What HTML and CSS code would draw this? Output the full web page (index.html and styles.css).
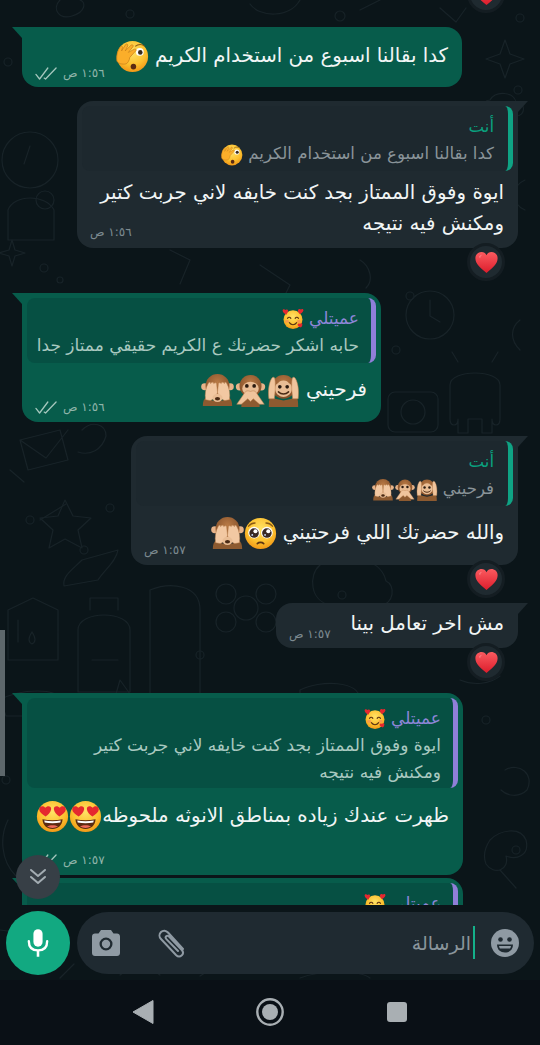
FILE: index.html
```html
<!DOCTYPE html>
<html lang="ar" dir="rtl">
  <head>
    <meta charset="UTF-8" />
    <meta name="viewport" content="width=device-width, initial-scale=1.0" />
    <title>محادثة</title>
    <link rel="stylesheet" href="styles.css">
  </head>
  <body>
    <!-- emoji and icon symbols -->
    <svg class="defs" aria-hidden="true">
      <defs>
        <radialGradient id="skin" cx="50%" cy="35%" r="70%">
          <stop offset="0" stop-color="#ffe266" />
          <stop offset="0.6" stop-color="#fcc02e" />
          <stop offset="1" stop-color="#ef8f12" />
        </radialGradient>
        <radialGradient id="fur" cx="50%" cy="35%" r="70%">
          <stop offset="0" stop-color="#b97a45" />
          <stop offset="1" stop-color="#7d4a26" />
        </radialGradient>
        <linearGradient id="red" x1="0" y1="0" x2="0" y2="1">
          <stop offset="0" stop-color="#fb5a5f" />
          <stop offset="1" stop-color="#dc1d2c" />
        </linearGradient>
        <symbol id="e-heart" viewBox="0 0 36 36">
          <path fill="url(#red)" d="M18 33C9 26 2 20 2 12 2 6 6.500 3 11 3c3 0 5.500 1.500 7 4.500C19.500 4.500 22 3 25 3c4.500 0 9 3 9 9 0 8-7 14-16 21z" />
          <path fill="#ff9a9c" opacity=".6" d="M7 10c1-2 3-3 5-3-2 1-3 3-3 5z" />
        </symbol>
        <symbol id="e-peek" viewBox="0 0 36 36">
          <circle cx="18" cy="18" r="17" fill="url(#skin)" />
          <circle cx="26" cy="13" r="4.200" fill="#fff" />
          <circle cx="26.500" cy="13.500" r="2.500" fill="#3a2a1c" />
          <path d="M21 7c3-2.500 7-2.500 10-.5" stroke="#8a5a14" stroke-width="1.200" fill="none" />
          <ellipse cx="19" cy="29" rx="3" ry="3.200" fill="#5b2a12" />
          <path fill="#fbae2a" stroke="#c9801a" stroke-width=".8" d="M1 23C0 17 2 11 5 7c1-1 2.500 0 2 1.500L6 12l4.500-7c1-1.500 3 0 2.300 1.500L10 12l6.500-6.500c1.200-1 3 .4 2 1.800l-5 6.200 6.500-3.500c1.500-.8 2.600 1 1.400 2L15 19c-.5 3.500-2 6-4 7-4 1-9-.5-10-3z" />
        </symbol>
        <symbol id="e-love" viewBox="0 0 36 36">
          <circle cx="18" cy="19" r="15.500" fill="url(#skin)" />
          <ellipse cx="8.500" cy="22" rx="3.200" ry="2.200" fill="#f58a5a" opacity=".7" />
          <ellipse cx="27.500" cy="22" rx="3.200" ry="2.200" fill="#f58a5a" opacity=".7" />
          <path d="M9 17c1.500-2.500 4-2.500 5.500 0M21.500 17c1.500-2.500 4-2.500 5.500 0M12 24c3 4.500 9 4.500 12 0" stroke="#5b3313" stroke-width="1.800" fill="none" stroke-linecap="round" />
          <path fill="#e5282f" d="M7 11C3.500 8.500 1 6.500 1 4c0-2 2.800-3.200 4.500-.8C7 1.500 10.500 2.300 10 5c-.3 2-1.500 4-3 6zM29 10c-1.500-2-3-4-3-6 0-2.500 3.500-3.500 5-1.500C32.500.5 35.500 1.500 35 4c-.4 2.500-3 4.500-6 6zM31 32c-2.500-.5-5-2-5.500-4-.5-2.300 2.500-3.500 3.800-2 .8-2 4-1.500 4 1 0 2-1 3.500-2.300 5z" />
        </symbol>
        <symbol id="e-hearteyes" viewBox="0 0 36 36">
          <circle cx="18" cy="18" r="17" fill="url(#skin)" />
          <path fill="#e5282f" d="M10.500 18C6.500 15.500 3.500 13 3.500 10c0-3 4-4.500 6.500-1.500C12.500 5.500 17 6.500 16.500 10c-.3 3-3 6-6 8zM25.500 18c-3-2-5.700-5-6-8-.5-3.500 4-4.500 6.500-1.500C28.500 5.500 32.500 7 32.500 10c0 3-3 5.500-7 8z" />
          <path fill="#5b2a12" d="M7 21c7 1.600 15 1.600 22 0-.5 7-5 10.500-11 10.500S7.500 28 7 21z" />
          <path fill="#fff" d="M9 22.400c6 1 12 1 18 0l-.5 2.200c-5.500.9-11.500.9-17 0z" />
          <path fill="#ef6a5a" d="M12 29c3-2 9-2 12 0-3.500 2-8.500 2-12 0z" />
        </symbol>
        <symbol id="e-plead" viewBox="0 0 36 36">
          <circle cx="18" cy="18" r="17" fill="url(#skin)" />
          <path d="M5 10c2-2.500 4.500-3.500 7-3.500M31 10c-2-2.500-4.500-3.500-7-3.500" stroke="#8a5a14" stroke-width="1.500" fill="none" stroke-linecap="round" />
          <circle cx="11" cy="17" r="6.400" fill="#fff" />
          <circle cx="25" cy="17" r="6.400" fill="#fff" />
          <circle cx="11" cy="17.500" r="5.200" fill="#3a2a24" />
          <circle cx="25" cy="17.500" r="5.200" fill="#3a2a24" />
          <circle cx="12.500" cy="15.500" r="2.200" fill="#fff" />
          <circle cx="26.500" cy="15.500" r="2.200" fill="#fff" />
          <circle cx="9" cy="19.500" r="1" fill="#cfe3ff" />
          <circle cx="23" cy="19.500" r="1" fill="#cfe3ff" />
          <path d="M14.500 29c1.800-1.800 5.200-1.800 7 0" stroke="#5b3313" stroke-width="1.800" fill="none" stroke-linecap="round" />
        </symbol>
        <symbol id="e-m-see" viewBox="0 0 36 36">
          <path fill="#8d5a30" d="M2 35c0-5 1-8 4-10l6 4h12l6-4c3 2 4 5 4 10z" />
          <circle cx="4" cy="14" r="3.800" fill="#e8b48a" />
          <circle cx="32" cy="14" r="3.800" fill="#e8b48a" />
          <circle cx="18" cy="13" r="13" fill="url(#fur)" />
          <path fill="#f2c8a2" stroke="#b9804e" stroke-width=".5" d="M5 28C4 22 5 15 8 10c1-1.500 2.500-1 2.500.5 1-2 3-2 3.500 0 1-1.500 3-1 3 .5L18 20c-1 4-4 8-8 9zM31 28c1-6 0-13-3-18-1-1.500-2.500-1-2.500.5-1-2-3-2-3.500 0-1-1.500-3-1-3 .5L18 20c1 4 4 8 8 9z" />
          <ellipse cx="18" cy="26" rx="5.500" ry="4.500" fill="#e9bd95" />
          <ellipse cx="18" cy="27" rx="2.800" ry="2" fill="#4a2a15" />
        </symbol>
        <symbol id="e-m-speak" viewBox="0 0 36 36">
          <path fill="#8d5a30" d="M8 36c0-8 4-12 10-12s10 4 10 12z" />
          <circle cx="6" cy="14" r="4" fill="#e8b48a" />
          <circle cx="30" cy="14" r="4" fill="#e8b48a" />
          <circle cx="18" cy="13" r="12" fill="url(#fur)" />
          <ellipse cx="18" cy="16" rx="9" ry="7.500" fill="#e9bd95" />
          <circle cx="14" cy="13" r="2" fill="#2a1a10" />
          <circle cx="22" cy="13" r="2" fill="#2a1a10" />
          <path fill="#f0c49c" stroke="#b9804e" stroke-width=".6" d="M3 33l9-13c1-2 3-2 6-1 3-1 5-1 6 1l9 13h-5l-7-6-3 3-3-3-7 6z" />
        </symbol>
        <symbol id="e-m-hear" viewBox="0 0 36 36">
          <path fill="#8d5a30" d="M2 36c0-5 0-9 2-11l5 2 9 2 9-2 5-2c2 2 2 6 2 11z" />
          <circle cx="18" cy="14" r="13" fill="url(#fur)" />
          <path fill="#e9bd95" d="M18 7c3 0 5 1.500 6 3 3 1 4 5 3 8-1 4-5 7-9 7s-8-3-9-7c-1-3 0-7 3-8 1-1.500 3-3 6-3z" />
          <circle cx="14" cy="14" r="2" fill="#2a1a10" />
          <circle cx="22" cy="14" r="2" fill="#2a1a10" />
          <path d="M12.500 19.500c3 3 8 3 11 0" stroke="#4a2a15" stroke-width="1.600" fill="none" stroke-linecap="round" />
          <path fill="#f0c49c" stroke="#b9804e" stroke-width=".6" d="M2 27C1 18 2 10 5 5c1-2 3-2 3.500 0 .8 4 .5 8 .5 12l-1 10zM34 27c1-9 0-17-3-22-1-2-3-2-3.500 0-.8 4-.5 8-.5 12l1 10z" />
        </symbol>
        <symbol id="i-ticks" viewBox="0 0 24 14">
          <path d="M1 8l4 5L14 1M10 12l1.500 1L23 1" fill="none" stroke="currentColor" stroke-width="1.400" stroke-linecap="round" stroke-linejoin="round" />
        </symbol>
      </defs>
    </svg>

    <div class="screen">
      <!-- wallpaper, drawn once behind chat and composer -->
      <svg class="wallpaper" viewBox="0 0 540 980" aria-hidden="true">
        <g fill="none" stroke="#182328" stroke-width="1.200" stroke-linecap="round" stroke-linejoin="round">
          <circle cx="30" cy="160" r="28" />
          <path d="M8 210c6-16 38-16 46 0v30H8zM30 146l-6 18" />
          <circle cx="45" cy="200" r="9" />
          <path d="M60 0c-8 8-2 20 12 16s14-14 8-16M250 4c10 14 40 14 50-4M360 10l20-10M440 8l16 14 10-14" />
          <path d="M505 40l5 14 14 5-14 5-5 14-5-14-14-5 14-5zM12 240l3 10 10 3-10 3-3 10-3-10-10-3 10-3z" />
          <path d="M490 100c6-10 24-8 26 2 10 0 10 14 0 14h-26c-10 0-10-16 0-16zM525 180c-14 6-14 24 0 30" />
          <path d="M170 250l20 10-10 24M260 265l30 20-10 20M360 260c10 6 14 20 6 28" />
          <path d="M20 440l40-10 8 30-40 10zM20 440l26 18 22-28M65 500l8 16 18 2-13 12 4 18-17-9-16 9 4-18-13-12 18-2z" />
          <path d="M90 320l30-10 6 14-30 12zM82 430c10-10 24-6 24 6-4 14-16 20-28 16" />
          <circle cx="430" cy="315" r="24" />
          <path d="M430 300v16l10 6M520 320c-10 8-10 20 0 30" />
          <path d="M450 385c0-16 50-16 50 0v34c0 8-8 8-8 0v14h-10v-14h-14v14h-10v-14c0 8-8 8-8 0zM458 362l-6-10M492 362l6-10" />
          <rect x="388" y="392" width="50" height="40" rx="7" />
          <circle cx="413" cy="412" r="12" />
          <path d="M8 610l25-12 25 12v50H8zM18 620v22M32 632c-4 6-4 10 0 12 4-2 4-6 0-12" />
          <path d="M82 560c-10 10-20 16-18 26l34-6c6-10 18-18 20-30zM78 630c0-20 52-20 52 0v62H78zM90 610v-12h28v12M92 660h26" />
          <path d="M150 590c20-8 50-6 50 20v90c-14 10-40 8-50 0z" />
          <circle cx="246" cy="608" r="12" />
          <circle cx="226" cy="594" r="10" />
          <circle cx="266" cy="594" r="10" />
          <circle cx="226" cy="622" r="10" />
          <circle cx="266" cy="622" r="10" />
          <path d="M320 565c20-12 60-10 66 16 10 4 8 24-6 24h-50c-20-4-22-30-10-40zM390 540c8-4 16-4 24 0" />
          <path d="M10 470l14 12M40 520l26-16M0 700c20-12 60-12 60 0l-6 16H6zM80 700l-8 20 14-4-6 22" />
          <path d="M120 680l10 14 16 2-12 12 4 16-16-8-14 8 4-16-12-12 16-2zM300 690c20-10 60-10 60 10 0 20-40 30-60 10zM460 680c14 6 30 4 40-4M505 770c14-8 30 4 22 20-8 8-20 6-26 0" />
          <path d="M490 840c10-10 30-14 36 0 4 16-10 20-20 16 4 14-12 20-20 8-4-10 0-18 4-24zM8 820c-8 16-8 40 8 56M500 870l16 18M0 930l30 4M470 960l30-24M120 975c10-8 30-8 40 0M60 978l14-14M200 976l16-10M300 978c20-8 60-8 70 0" />
        </g>
        <g fill="none" stroke="#172227" stroke-width="1.200">
          <circle cx="84" cy="34" r="4" />
          <circle cx="130" cy="14" r="4" />
          <circle cx="340" cy="16" r="5" />
          <circle cx="520" cy="18" r="4" />
          <circle cx="8" cy="62" r="4" />
          <circle cx="518" cy="90" r="4" />
          <circle cx="44" cy="268" r="4" />
          <circle cx="60" cy="280" r="3" />
          <circle cx="410" cy="296" r="4" />
          <circle cx="396" cy="350" r="4" />
          <circle cx="30" cy="520" r="4" />
          <circle cx="84" cy="550" r="4" />
          <circle cx="110" cy="508" r="4" />
          <circle cx="212" cy="556" r="4" />
          <circle cx="342" cy="595" r="4" />
          <circle cx="200" cy="655" r="4" />
          <circle cx="478" cy="660" r="4" />
          <circle cx="510" cy="620" r="4" />
          <circle cx="486" cy="720" r="4" />
          <circle cx="516" cy="850" r="4" />
          <circle cx="6" cy="780" r="4" />
        </g>
      </svg>

      <main class="chat">
        <div class="reaction reaction-top"><svg class="heart"><use href="#e-heart" /></svg></div>

        <div class="bubble out m1">
          <div class="row">
            <p class="text">كدا بقالنا اسبوع من استخدام الكريم <svg class="emoji"><use href="#e-peek" /></svg></p>
            <span class="meta">١:٥٦ ص<svg class="ticks"><use href="#i-ticks" /></svg></span>
          </div>
        </div>

        <div class="bubble in m2">
          <div class="quote">
            <div class="quote-name">أنت</div>
            <div class="quote-text">كدا بقالنا اسبوع من استخدام الكريم <svg class="emoji-sm"><use href="#e-peek" /></svg></div>
          </div>
          <div class="row">
            <p class="text">ايوة وفوق الممتاز بجد كنت خايفه لاني جربت كتير<br>ومكنش فيه نتيجه</p>
            <span class="meta">١:٥٦ ص</span>
          </div>
          <div class="reaction"><svg class="heart"><use href="#e-heart" /></svg></div>
        </div>

        <div class="bubble out m3">
          <div class="quote">
            <div class="quote-name">عميتلي <svg class="emoji-sm"><use href="#e-love" /></svg></div>
            <div class="quote-text">حابه اشكر حضرتك ع الكريم حقيقي ممتاز جدا</div>
          </div>
          <div class="row">
            <p class="text">فرحيني <span class="emojis"><svg class="emoji"><use href="#e-m-hear" /></svg><svg class="emoji"><use href="#e-m-speak" /></svg><svg class="emoji"><use href="#e-m-see" /></svg></span></p>
            <span class="meta">١:٥٦ ص<svg class="ticks"><use href="#i-ticks" /></svg></span>
          </div>
        </div>

        <div class="bubble in m4">
          <div class="quote">
            <div class="quote-name">أنت</div>
            <div class="quote-text">فرحيني <span class="emojis"><svg class="emoji-sm"><use href="#e-m-hear" /></svg><svg class="emoji-sm"><use href="#e-m-speak" /></svg><svg class="emoji-sm"><use href="#e-m-see" /></svg></span></div>
          </div>
          <div class="row">
            <p class="text">والله حضرتك اللي فرحتيني <span class="emojis"><svg class="emoji"><use href="#e-plead" /></svg><svg class="emoji"><use href="#e-m-see" /></svg></span></p>
            <span class="meta">١:٥٧ ص</span>
          </div>
          <div class="reaction"><svg class="heart"><use href="#e-heart" /></svg></div>
        </div>

        <div class="bubble in m5">
          <div class="row">
            <p class="text">مش اخر تعامل بينا</p>
            <span class="meta">١:٥٧ ص</span>
          </div>
          <div class="reaction"><svg class="heart"><use href="#e-heart" /></svg></div>
        </div>

        <div class="bubble out m6">
          <div class="quote">
            <div class="quote-name">عميتلي <svg class="emoji-sm"><use href="#e-love" /></svg></div>
            <div class="quote-text">ايوة وفوق الممتاز بجد كنت خايفه لاني جربت كتير<br>ومكنش فيه نتيجه</div>
          </div>
          <p class="text text-full">ظهرت عندك زياده بمناطق الانوثه ملحوظه<span class="emojis"><svg class="emoji"><use href="#e-hearteyes" /></svg><svg class="emoji"><use href="#e-hearteyes" /></svg></span></p>
          <div class="row-end">
            <span class="meta">١:٥٧ ص<svg class="ticks"><use href="#i-ticks" /></svg></span>
          </div>
        </div>

        <div class="bubble out m7">
          <div class="quote">
            <div class="quote-name">عميتلي <svg class="emoji-sm"><use href="#e-love" /></svg></div>
          </div>
        </div>
      </main>

      <button class="scroll-down" type="button" aria-label="الانتقال للأسفل">
        <svg viewBox="0 0 24 24" width="24" height="24"><path d="M5 5l7 6 7-6M5 12l7 6 7-6" fill="none" stroke="#a3acb2" stroke-width="2" stroke-linecap="round" stroke-linejoin="round" /></svg>
      </button>
      <div class="scrollbar"></div>

      <div class="composer">
        <div class="input">
          <svg class="icon-smile" viewBox="0 0 28 28"><circle cx="14" cy="14" r="14" fill="#8f9aa3" /><circle cx="9.500" cy="10.500" r="2.300" fill="#1f2a31" /><circle cx="18.500" cy="10.500" r="2.300" fill="#1f2a31" /><path d="M6 15.500h16c0 5-3.500 8-8 8s-8-3-8-8z" fill="#1f2a31" /><path d="M8 17h12c-.2 1.200-.5 2-1 2.600H9c-.5-.6-.8-1.400-1-2.600z" fill="#8f9aa3" /></svg>
          <span class="caret"></span>
          <span class="placeholder">الرسالة</span>
          <svg class="icon-clip" viewBox="0 0 32 32"><path d="M27 22L12 5.500C10 3.300 7 3 5 5s-2 5 0 7l15 16c1.800 1.800 4.200 1.800 5.800.3 1.500-1.500 1.500-3.800-.2-5.600L13 9.500c-.9-.9-2-.9-2.800-.2-.8.800-.7 1.900.2 2.800L22 24" fill="none" stroke="#8f9aa3" stroke-width="2" stroke-linecap="round" /></svg>
          <svg class="icon-camera" viewBox="0 0 28 26"><path fill="#8f9aa3" fill-rule="evenodd" d="M9 0h10l2.500 3.500H25c1.700 0 3 1.300 3 3V23c0 1.700-1.300 3-3 3H3c-1.700 0-3-1.300-3-3V6.500c0-1.700 1.300-3 3-3h3.500zM14 7.500a6.500 6.500 0 100 13 6.500 6.500 0 000-13zm0 2.300a4.200 4.200 0 110 8.400 4.200 4.200 0 010-8.400z" /></svg>
        </div>
        <div class="mic">
          <svg viewBox="0 0 24 32" width="22" height="30"><rect x="7" y="1" width="10" height="19" rx="5" fill="#fff" /><path d="M2 14c0 7 4 10 10 10s10-3 10-10" fill="none" stroke="#fff" stroke-width="2.600" stroke-linecap="round" /><path d="M12 24v7" stroke="#fff" stroke-width="2.800" /></svg>
        </div>
      </div>
    </div>

    <nav class="navbar">
      <svg class="nav-icon" viewBox="0 0 28 28"><path d="M24 2.500v23L4 14z" fill="#a9afb3" stroke="#a9afb3" stroke-linejoin="round" /></svg>
      <svg class="nav-icon" viewBox="0 0 28 28"><circle cx="14" cy="14" r="12.700" fill="none" stroke="#a9afb3" stroke-width="2.400" /><circle cx="14" cy="14" r="8" fill="#a9afb3" /></svg>
      <svg class="nav-icon" viewBox="0 0 28 28"><rect x="4" y="4" width="20" height="20" rx="3" fill="#a9afb3" /></svg>
    </nav>
  </body>
</html>
```

FILE: styles.css
```css
body {
  margin: 0;
  width: 540px;
  height: 1045px;
  overflow: hidden;
  direction: rtl;
  background-color: #0a1016;
  color: #f1f5f5;
  font-family: "DejaVu Sans", sans-serif;
}
p {
  margin: 0;
}
.defs {
  position: absolute;
  width: 0;
  height: 0;
}
.screen {
  position: relative;
  height: 980px;
  background: #0b1519;
}
.wallpaper {
  position: absolute;
  top: 0;
  left: 0;
  width: 540px;
  height: 980px;
}

/* chat */
.chat {
  position: relative;
  height: 905px;
  padding-top: 27px;
  box-sizing: border-box;
  overflow: hidden;
  display: flex;
  flex-direction: column;
}
.bubble {
  position: relative;
  flex: none;
  box-sizing: border-box;
  padding: 5px;
  border-radius: 16px;
}
.bubble.out {
  background: #075c4b;
  margin-left: 22px;
  align-self: flex-end;
  border-top-left-radius: 0;
}
.bubble.in {
  background: #1f2a30;
  margin-right: 22px;
  align-self: flex-start;
  border-top-right-radius: 0;
}
.bubble::before {
  content: "";
  position: absolute;
  top: 0;
  width: 10px;
  height: 11px;
  background: inherit;
}
.bubble.out::before {
  left: -10px;
  clip-path: polygon(0 0, 100% 0, 100% 100%);
}
.bubble.in::before {
  right: -10px;
  clip-path: polygon(0 0, 100% 0, 0 100%);
}
.m1 { width: 440px; height: 60px; margin-bottom: 14px; }
.m2 { width: 441px; height: 147px; margin-bottom: 45px; }
.m3 { width: 359px; height: 129px; margin-bottom: 14px; }
.m4 { width: 387px; height: 129px; margin-bottom: 38px; }
.m5 { width: 242px; height: 45px; margin-bottom: 45px; }
.m6 { width: 441px; height: 182px; margin-bottom: 3px; }
.m7 { width: 441px; height: 60px; }

.quote {
  box-sizing: border-box;
  height: 65px;
  padding: 7px 12px 0 8px;
  border-radius: 8px;
  border-right: 5px solid #8f7fd8;
  background: #065043;
  font-size: 17px;
  line-height: 27px;
}
.m6 .quote {
  height: 90px;
}
.in .quote {
  padding-right: 14px;
  background: #1d282e;
  border-right-color: #0fa384;
  font-size: 16.6px;
}
.quote-name {
  color: #8d86d8;
  white-space: nowrap;
}
.in .quote-name {
  color: #0aa17f;
}
.quote-text {
  color: #a9c9c0;
  white-space: nowrap;
}
.in .quote-text {
  color: #8a9499;
}
.row {
  display: flex;
  justify-content: space-between;
  align-items: flex-end;
  padding: 6px 9px 3px 8px;
}
.row .text {
  flex: 1;
  min-width: 0;
}
.m1 .row { padding-top: 8px; }
.m3 .row, .m4 .row { padding-top: 11px; }
.m5 .row { padding-top: 0; }
.m1 .meta, .m3 .meta, .m4 .meta { margin-bottom: -8px; }
.m2 .meta { margin-bottom: -1px; }
.m5 .meta { margin-bottom: -3px; }
.text {
  font-size: 19.8px;
  line-height: 31px;
  white-space: nowrap;
}
.text-full {
  padding: 12px 9px 0 0;
}
.row-end {
  display: flex;
  justify-content: flex-end;
  padding: 19px 8px 0;
}
.meta {
  display: inline-flex;
  align-items: center;
  gap: 6px;
  flex: none;
  font-size: 12px;
  line-height: 16px;
  color: #8fb5aa;
  white-space: nowrap;
}
.in .meta {
  color: #7d8a90;
}
.ticks {
  width: 22px;
  height: 13px;
  color: #a5c7bd;
}
.emojis {
  display: inline-flex;
  vertical-align: middle;
}
.emoji {
  width: 33px;
  height: 33px;
  vertical-align: middle;
}
.emoji-sm {
  width: 22px;
  height: 22px;
  vertical-align: middle;
}

/* overlays */
.reaction {
  position: absolute;
  right: 13px;
  bottom: -33px;
  width: 38px;
  height: 38px;
  box-sizing: border-box;
  border-radius: 50%;
  background: #1f2a30;
  border: 3px solid #141d22;
  display: flex;
  align-items: center;
  justify-content: center;
}
.reaction-top {
  top: -25px;
  right: 35px;
  bottom: auto;
}
.heart {
  width: 25px;
  height: 25px;
}
.scroll-down {
  position: absolute;
  top: 855px;
  left: 16px;
  width: 44px;
  height: 44px;
  padding: 0;
  border: none;
  border-radius: 50%;
  background: #373f46;
  display: flex;
  align-items: center;
  justify-content: center;
}
.scrollbar {
  position: absolute;
  top: 630px;
  left: 0;
  width: 5px;
  height: 146px;
  background: #5d676b;
}

/* composer */
.composer {
  position: relative;
  height: 75px;
  box-sizing: border-box;
  display: flex;
  align-items: center;
  gap: 7px;
  padding: 0 6px;
}
.input {
  flex: 1;
  height: 62px;
  box-sizing: border-box;
  padding: 0 15px 0 15px;
  border-radius: 31px;
  background: #1f2a31;
  display: flex;
  align-items: center;
}
.icon-smile {
  width: 28px;
  height: 28px;
  flex: none;
}
.caret {
  width: 2px;
  height: 33px;
  margin-right: 16px;
  background: #14b08a;
  flex: none;
}
.placeholder {
  flex: 1;
  margin-right: 2px;
  font-size: 19px;
  color: #8a959b;
}
.icon-clip {
  width: 32px;
  height: 32px;
  flex: none;
  margin-left: 36px;
}
.icon-camera {
  width: 28px;
  height: 26px;
  flex: none;
}
.mic {
  width: 64px;
  height: 64px;
  flex: none;
  border-radius: 50%;
  background: #12a981;
  display: flex;
  align-items: center;
  justify-content: center;
}

/* android nav */
.navbar {
  height: 65px;
  display: flex;
  direction: ltr;
  justify-content: center;
  align-items: flex-start;
  gap: 99px;
  padding-top: 18px;
  box-sizing: border-box;
  background: #0a1016;
}
.nav-icon {
  width: 28px;
  height: 28px;
}
```
